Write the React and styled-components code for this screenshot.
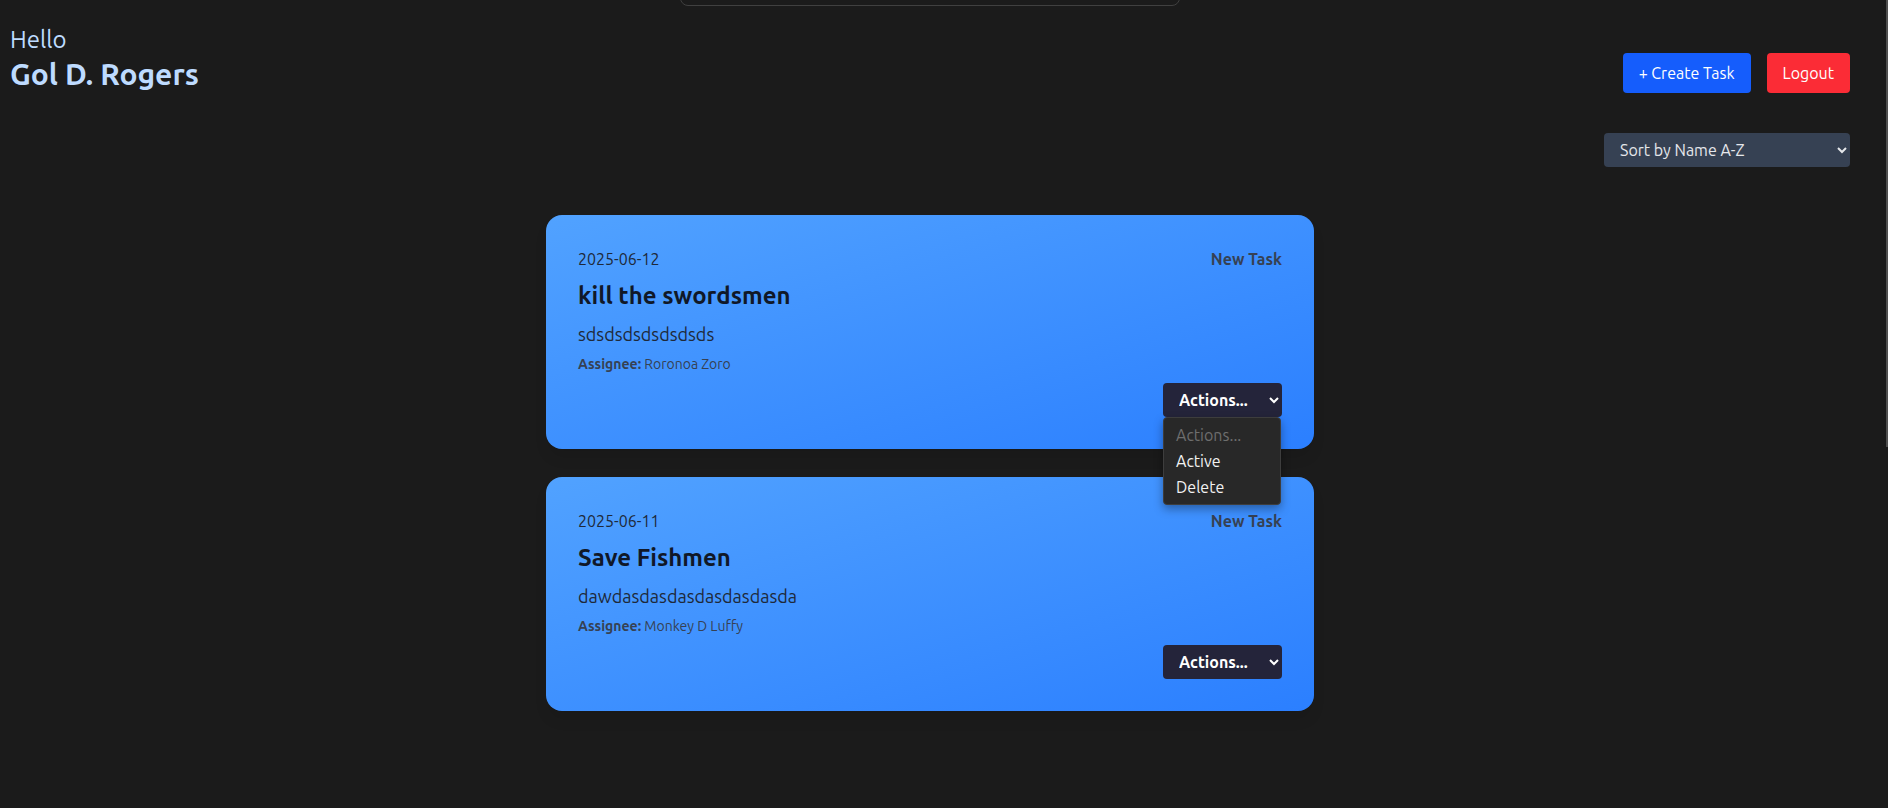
import React from "react";
import styled, { createGlobalStyle } from "styled-components";

const FONT = `Ubuntu, "Noto Sans", "Open Sans", sans-serif`;

const GlobalStyle = createGlobalStyle`
  html, body {
    margin: 0;
    padding: 0;
    background: #1b1b1b;
    height: 100%;
    overflow: hidden;
  }
  * { box-sizing: border-box; }
  body { font-family: ${FONT}; }
`;

const Viewport = styled.div`
  position: relative;
  height: 100vh;
  overflow-y: auto;
  background: #1b1b1b;
  &::-webkit-scrollbar { width: 2px; }
  &::-webkit-scrollbar-track { background: #1b1b1b; }
  &::-webkit-scrollbar-thumb { background: #4f4f4f; }
`;

const ScrollThumb = styled.div`
  position: fixed;
  top: 0;
  right: 0;
  width: 2px;
  height: 447px;
  background: #4f4f4f;
  z-index: 10;
`;

const Page = styled.div`
  position: relative;
  min-height: 808px;
  padding: 0 38px 0 10px;
  font-family: ${FONT};
`;

const TopPanel = styled.div`
  position: absolute;
  top: -50px;
  left: 680px;
  width: 500px;
  height: 56px;
  border: 1px solid #404040;
  border-radius: 8px;
  background: #1b1b1b;
`;

const Header = styled.header`
  display: flex;
  justify-content: space-between;
  align-items: flex-start;
  padding-top: 24px;
`;

const Greeting = styled.div`
  display: flex;
  flex-direction: column;
`;

const Hello = styled.span`
  font-size: 24px;
  line-height: 32px;
  color: #bedbff;
`;

const UserName = styled.h1`
  margin: 0;
  font-size: 30px;
  line-height: 36px;
  font-weight: 700;
  color: #bedbff;
`;

const HeaderActions = styled.div`
  display: flex;
  gap: 16px;
  margin-top: 29px;
`;

const Button = styled.button`
  font-family: ${FONT};
  font-size: 16px;
  line-height: 24px;
  padding: 8px 16px;
  border: none;
  border-radius: 4px;
  color: #ffffff;
  background: ${(p) => (p.$variant === "danger" ? "#fb2c36" : "#155dfc")};
  cursor: pointer;
`;

const SortRow = styled.div`
  display: flex;
  justify-content: flex-end;
  margin-top: 40px;
`;

const SortSelect = styled.select`
  width: 246px;
  height: 34px;
  padding: 0 12px;
  font-family: ${FONT};
  font-size: 16px;
  color: #e5e7eb;
  background-color: #364153;
  border: none;
  border-radius: 4px;
`;

const CardList = styled.div`
  display: flex;
  flex-direction: column;
  align-items: center;
  gap: 28px;
  margin-top: 48px;
`;

const Card = styled.article`
  position: relative;
  width: 768px;
  padding: 32px;
  border-radius: 16px;
  background: linear-gradient(to bottom right, #51a2ff, #2b7fff);
  box-shadow: 0 10px 15px -3px rgba(0, 0, 0, 0.1);
`;

const CardTop = styled.div`
  display: flex;
  justify-content: space-between;
  font-size: 16px;
  line-height: 24px;
`;

const DateText = styled.span`
  color: #1e2939;
`;

const Status = styled.span`
  color: #364153;
  font-weight: 700;
`;

const Title = styled.h2`
  margin: 9px 0 0;
  font-size: 24px;
  line-height: 32px;
  font-weight: 700;
  color: #101828;
`;

const Description = styled.p`
  margin: 8px 0 0;
  font-size: 18px;
  line-height: 28px;
  color: #1e2939;
`;

const Assignee = styled.p`
  margin: 6px 0 0;
  font-size: 14px;
  line-height: 20px;
  color: #364153;
  & strong { font-weight: 700; }
`;

const CardFooter = styled.div`
  display: flex;
  justify-content: flex-end;
  margin-top: 9px;
`;

const SelectWrap = styled.div`
  position: relative;
`;

const ActionSelect = styled.select`
  width: 119px;
  height: 34px;
  padding: 0 12px;
  font-family: ${FONT};
  font-size: 16px;
  font-weight: 700;
  color: #ffffff;
  background-color: #24243a;
  border: none;
  border-radius: 4px;
`;

const OptionList = styled.ul`
  position: absolute;
  top: 34px;
  left: 0;
  z-index: 5;
  width: 118px;
  margin: 0;
  padding: 4px 0;
  list-style: none;
  background: #282828;
  border: 1px solid #3d3d3d;
  border-radius: 4px;
  box-shadow: 0 4px 10px rgba(0, 0, 0, 0.35);
`;

const OptionItem = styled.li`
  height: 26px;
  line-height: 26px;
  padding: 0 12px;
  font-size: 16px;
  color: ${(p) => (p.$muted ? "#6e6e6e" : "#f2f2f2")};
`;

const tasks = [
  {
    date: "2025-06-12",
    title: "kill the swordsmen",
    desc: "sdsdsdsdsdsdsds",
    assignee: "Roronoa Zoro",
    open: true,
  },
  {
    date: "2025-06-11",
    title: "Save Fishmen",
    desc: "dawdasdasdasdasdasdasda",
    assignee: "Monkey D Luffy",
    open: false,
  },
];

function TaskCard({ task }) {
  return (
    <Card>
      <CardTop>
        <DateText>{task.date}</DateText>
        <Status>New Task</Status>
      </CardTop>
      <Title>{task.title}</Title>
      <Description>{task.desc}</Description>
      <Assignee>
        <strong>Assignee:</strong> {task.assignee}
      </Assignee>
      <CardFooter>
        <SelectWrap>
          <ActionSelect defaultValue="">
            <option value="">Actions...</option>
            <option value="active">Active</option>
            <option value="delete">Delete</option>
          </ActionSelect>
          {task.open && (
            <OptionList>
              <OptionItem $muted>Actions...</OptionItem>
              <OptionItem>Active</OptionItem>
              <OptionItem>Delete</OptionItem>
            </OptionList>
          )}
        </SelectWrap>
      </CardFooter>
    </Card>
  );
}

export default function App() {
  return (
    <>
      <GlobalStyle />
      <Viewport>
        <ScrollThumb />
        <Page>
          <TopPanel />
          <Header>
            <Greeting>
              <Hello>Hello</Hello>
              <UserName>Gol D. Rogers</UserName>
            </Greeting>
            <HeaderActions>
              <Button>+ Create Task</Button>
              <Button $variant="danger">Logout</Button>
            </HeaderActions>
          </Header>
          <SortRow>
            <SortSelect defaultValue="az">
              <option value="az">Sort by Name A-Z</option>
              <option value="za">Sort by Name Z-A</option>
            </SortSelect>
          </SortRow>
          <CardList>
            {tasks.map((t) => (
              <TaskCard key={t.title} task={t} />
            ))}
          </CardList>
        </Page>
      </Viewport>
    </>
  );
}
